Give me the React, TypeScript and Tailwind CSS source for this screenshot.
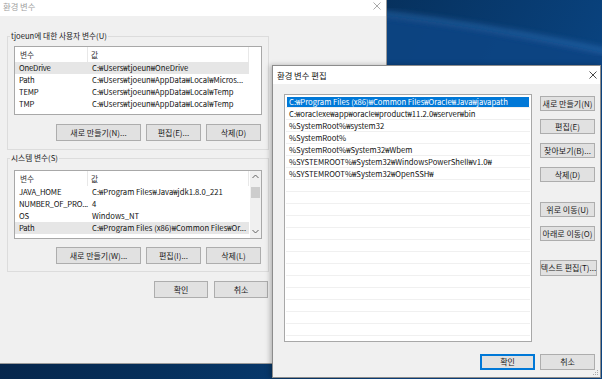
import React from "react";

const FONT = "font-['Noto_Sans_CJK_KR',sans-serif]";

interface Row {
  name: string;
  value: string;
}

const userVars: Row[] = [
  { name: "OneDrive", value: "C:₩Users₩tjoeun₩OneDrive" },
  { name: "Path", value: "C:₩Users₩tjoeun₩AppData₩Local₩Micros..." },
  { name: "TEMP", value: "C:₩Users₩tjoeun₩AppData₩Local₩Temp" },
  { name: "TMP", value: "C:₩Users₩tjoeun₩AppData₩Local₩Temp" },
];

const systemVars: Row[] = [
  { name: "JAVA_HOME", value: "C:₩Program Files₩Java₩jdk1.8.0_221" },
  { name: "NUMBER_OF_PRO...", value: "4" },
  { name: "OS", value: "Windows_NT" },
  { name: "Path", value: "C:₩Program Files (x86)₩Common Files₩Or..." },
];

const pathEntries = [
  "C:₩Program Files (x86)₩Common Files₩Oracle₩Java₩javapath",
  "C:₩oraclexe₩app₩oracle₩product₩11.2.0₩server₩bin",
  "%SystemRoot%₩system32",
  "%SystemRoot%",
  "%SystemRoot%₩System32₩Wbem",
  "%SYSTEMROOT%₩System32₩WindowsPowerShell₩v1.0₩",
  "%SYSTEMROOT%₩System32₩OpenSSH₩",
];

function CloseIcon({ color }: { color: string }) {
  return (
    <svg width="8" height="8" viewBox="0 0 8 8">
      <path d="M0.5 0.5 L7.5 7.5 M7.5 0.5 L0.5 7.5" stroke={color} strokeWidth="0.9" />
    </svg>
  );
}

function WinButton({
  label,
  className = "",
  primary = false,
}: {
  label: string;
  className?: string;
  primary?: boolean;
}) {
  return (
    <button
      className={`flex shrink-0 items-center justify-center border bg-[#e1e1e1] text-[8px] leading-none text-[#1a1a1a] whitespace-nowrap ${
        primary ? "border-[#0078d7] shadow-[inset_0_0_0_1px_#0078d7]" : "border-[#adadad]"
      } ${className}`}
    >
      {label}
    </button>
  );
}

function ListView({
  rows,
  selected,
  scroll = false,
}: {
  rows: Row[];
  selected: number;
  scroll?: boolean;
}) {
  return (
    <div className="relative flex h-[69px] w-[248px] border border-[#a8a8a8] bg-white">
      <div className="flex w-[234px] flex-col">
        <div className="flex h-[15px] items-center text-[#333]">
          <div className="flex h-full w-[73px] items-center border-r border-[#e8e8e8] pl-[5px]">변수</div>
          <div className="flex h-full w-[161px] items-center border-r border-[#e8e8e8] pl-[3px]">값</div>
        </div>
        {rows.map((row, i) => (
          <div
            key={row.name}
            className={`flex h-[12px] whitespace-nowrap leading-[12px] text-[#111] ${
              i === selected ? "bg-[#e6e6e6]" : ""
            }`}
          >
            <div className="w-[73px] pl-[4px] tracking-[-0.2px]">{row.name}</div>
            <div className="w-[161px] overflow-hidden pl-[4px]">{row.value}</div>
          </div>
        ))}
      </div>
      {scroll && (
        <div className="ml-auto flex w-[11px] flex-col items-center bg-[#f0f0f0]">
          <svg width="7" height="5" viewBox="0 0 7 5" className="mt-[3px]">
            <path d="M0.5 4 L3.5 1 L6.5 4" stroke="#606060" strokeWidth="1" fill="none" />
          </svg>
          <div className="mt-[8px] h-[11px] w-[9px] bg-[#cdcdcd]" />
          <div className="flex-1" />
          <svg width="7" height="5" viewBox="0 0 7 5" className="mb-[4px]">
            <path d="M0.5 1 L3.5 4 L6.5 1" stroke="#606060" strokeWidth="1" fill="none" />
          </svg>
        </div>
      )}
    </div>
  );
}

function Desktop() {
  return (
    <svg className="absolute inset-0" width="602" height="379" viewBox="0 0 602 379">
      <defs>
        <linearGradient id="base" x1="0" y1="0" x2="1" y2="0.35">
          <stop offset="0" stopColor="#061a38" />
          <stop offset="0.55" stopColor="#06305c" />
          <stop offset="1" stopColor="#0a4685" />
        </linearGradient>
        <filter id="soft">
          <feGaussianBlur stdDeviation="3" />
        </filter>
      </defs>
      <rect width="602" height="379" fill="url(#base)" />
      <path d="M370 14 Q 480 26 610 54 L610 390 L370 390 Z" fill="#0b4584" opacity="0.9" filter="url(#soft)" />
      <path d="M370 12 Q 480 24 610 52" stroke="#3978c0" strokeWidth="4" fill="none" opacity="0.7" filter="url(#soft)" />
    </svg>
  );
}

export default function App() {
  return (
    <div className={`relative h-[379px] w-[602px] overflow-hidden ${FONT} text-[7.7px] leading-none`}>
      <Desktop />

      {/* 환경 변수 */}
      <div className="absolute left-0 top-0 flex h-[364px] w-[387px] flex-col border-b border-r border-[#9a9a9a] bg-[#f0f0f0]">
        <div className="flex h-[16px] shrink-0 items-start justify-between bg-white">
          <span className="pl-[3px] pt-[1px] text-[8.3px] leading-[10px] text-[#a0a0a0]">환경 변수</span>
          <div className="mr-[5px] mt-[2px]">
            <CloseIcon color="#a0a0a0" />
          </div>
        </div>
        <div className="flex w-[275px] flex-col pl-[7px]">
          <fieldset className="mt-[15px] h-[119px] w-[262px] border border-[#dcdcdc] px-[6px]">
            <legend className="-ml-[4px] px-[1px] leading-[10px] text-[#222]">tjoeun에 대한 사용자 변수(U)</legend>
            <div className="mt-[5px]">
              <ListView rows={userVars} selected={0} />
            </div>
            <div className="mt-[9px] flex justify-end gap-[5px] pr-[1px]">
              <WinButton label="새로 만들기(N)..." className="h-[17px] w-[85px]" />
              <WinButton label="편집(E)..." className="h-[17px] w-[55px]" />
              <WinButton label="삭제(D)" className="h-[17px] w-[55px]" />
            </div>
          </fieldset>
          <fieldset className="mt-[3px] h-[119px] w-[262px] border border-[#dcdcdc] px-[6px]">
            <legend className="-ml-[4px] px-[1px] leading-[10px] text-[#222]">시스템 변수(S)</legend>
            <div className="mt-[7px]">
              <ListView rows={systemVars} selected={3} scroll />
            </div>
            <div className="mt-[8px] flex justify-end gap-[5px] pr-[1px]">
              <WinButton label="새로 만들기(W)..." className="h-[17px] w-[85px]" />
              <WinButton label="편집(I)..." className="h-[17px] w-[55px]" />
              <WinButton label="삭제(L)" className="h-[17px] w-[55px]" />
            </div>
          </fieldset>
          <div className="mt-[9px] flex w-[261px] justify-end gap-[6px]">
            <WinButton label="확인" className="h-[17px] w-[54px]" />
            <WinButton label="취소" className="h-[17px] w-[54px]" />
          </div>
        </div>
      </div>

      {/* 환경 변수 편집 */}
      <div className="absolute left-[272px] top-[65px] flex h-[313px] w-[329px] flex-col border border-[#8c8c8c] bg-[#f0f0f0] shadow-[-2px_0_5px_rgba(0,0,0,0.25)]">
        <div className="flex h-[18px] shrink-0 items-center justify-between bg-white">
          <span className="pl-[4px] text-[8.3px] leading-none text-[#111]">환경 변수 편집</span>
          <div className="mr-[3px]">
            <CloseIcon color="#333" />
          </div>
        </div>
        <div className="flex pl-[11px] pt-[10px]">
          <div className="flex h-[248px] w-[248px] flex-col overflow-hidden border border-[#a8a8a8] bg-white p-[1px]">
            {Array.from({ length: 21 }).map((_, i) => (
              <div key={i} className="flex h-[12px] shrink-0 flex-col border-b border-[#f0f0f0]">
                <div
                  className={`mx-[1px] mt-[1px] h-[10px] whitespace-nowrap pl-[2px] leading-[10px] ${
                    i === 0 ? "bg-[#0078d7] text-white" : "text-[#111]"
                  }`}
                >
                  {pathEntries[i] ?? ""}
                </div>
              </div>
            ))}
          </div>
          <div className="ml-[8px] flex w-[57px] flex-col pt-[2px]">
            <WinButton label="새로 만들기(N)" className="h-[15px] w-[55px]" />
            <WinButton label="편집(E)" className="mt-[8px] h-[15px] w-[55px]" />
            <WinButton label="찾아보기(B)..." className="mt-[9px] h-[15px] w-[55px]" />
            <WinButton label="삭제(D)" className="mt-[9px] h-[15px] w-[55px]" />
            <WinButton label="위로 이동(U)" className="mt-[20px] h-[15px] w-[55px]" />
            <WinButton label="아래로 이동(O)" className="mt-[9px] h-[15px] w-[55px]" />
            <WinButton label="텍스트 편집(T)..." className="mt-[19px] h-[16px] w-[57px]" />
          </div>
        </div>
        <div className="mt-[12px] flex justify-end gap-[5px] pr-[5px]">
          <WinButton label="확인" primary className="h-[16px] w-[55px]" />
          <WinButton label="취소" className="h-[16px] w-[55px]" />
        </div>
        <svg width="6" height="6" viewBox="0 0 6 6" className="absolute bottom-[1px] right-[1px]">
          <rect x="4" y="0" width="1" height="1" fill="#aaa" />
          <rect x="2" y="2" width="1" height="1" fill="#aaa" />
          <rect x="4" y="2" width="1" height="1" fill="#aaa" />
          <rect x="0" y="4" width="1" height="1" fill="#aaa" />
          <rect x="2" y="4" width="1" height="1" fill="#aaa" />
          <rect x="4" y="4" width="1" height="1" fill="#aaa" />
        </svg>
      </div>
    </div>
  );
}
